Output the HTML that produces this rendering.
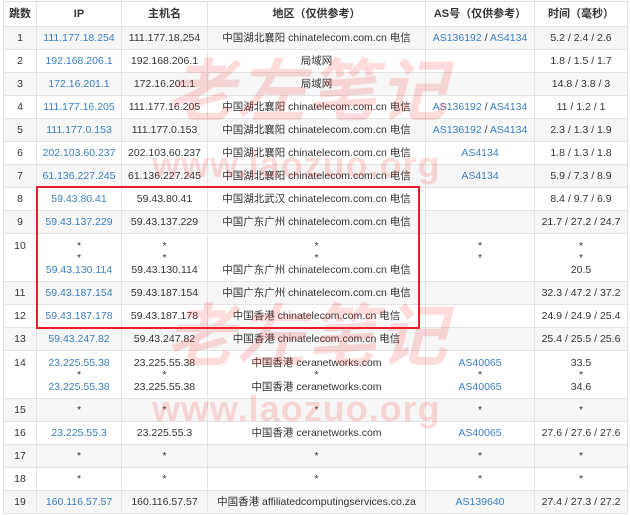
<!DOCTYPE html>
<html><head><meta charset="utf-8"><style>
body{margin:0;background:#fff;width:630px;height:515px;overflow:hidden;position:relative;font-family:"Liberation Sans","Noto Sans CJK SC",sans-serif;}
table{position:absolute;left:3px;top:1px;border-collapse:collapse;font-size:10.5px;color:#333;table-layout:fixed;}
td,th{border:1px solid #e3e3e3;text-align:center;padding:0;line-height:12px;}
th{height:24px;font-weight:bold;color:#333;font-size:11px}
td{height:22px}
tr.g td{background:#f6f6f6}
td.t{height:47px;vertical-align:middle}
td.t div{height:12px;line-height:12px;overflow:visible;white-space:nowrap}
td.v{vertical-align:top;padding-top:6px;height:41px}
a{color:#3a7fc1;text-decoration:none}
.box{position:absolute;left:36px;top:186px;width:380px;height:139px;border:2px solid #e8202a;}
.wm{position:absolute;color:rgba(255,50,50,0.17);font-weight:bold;white-space:nowrap;pointer-events:none}
.wm1{font-size:68px;line-height:80px;font-style:italic;letter-spacing:3px;font-family:"Noto Sans CJK SC",sans-serif;}
.wm2{font-size:36px;line-height:40px;letter-spacing:1px;font-family:"Liberation Sans",sans-serif}
</style></head><body>
<table>
<colgroup><col style="width:33px"><col style="width:85px"><col style="width:86px"><col style="width:218px"><col style="width:109px"><col style="width:93px"></colgroup>
<tr><th>跳数</th><th>IP</th><th>主机名</th><th>地区（仅供参考）</th><th>AS号（仅供参考）</th><th>时间（毫秒）</th></tr>
<tr class="g"><td>1</td><td><a>111.177.18.254</a></td><td>111.177.18.254</td><td>中国湖北襄阳 chinatelecom.com.cn 电信</td><td><a>AS136192</a> / <a>AS4134</a></td><td>5.2 / 2.4 / 2.6</td></tr>
<tr><td>2</td><td><a>192.168.206.1</a></td><td>192.168.206.1</td><td>局域网</td><td></td><td>1.8 / 1.5 / 1.7</td></tr>
<tr class="g"><td>3</td><td><a>172.16.201.1</a></td><td>172.16.201.1</td><td>局域网</td><td></td><td>14.8 / 3.8 / 3</td></tr>
<tr><td>4</td><td><a>111.177.16.205</a></td><td>111.177.16.205</td><td>中国湖北襄阳 chinatelecom.com.cn 电信</td><td><a>AS136192</a> / <a>AS4134</a></td><td>11 / 1.2 / 1</td></tr>
<tr class="g"><td>5</td><td><a>111.177.0.153</a></td><td>111.177.0.153</td><td>中国湖北襄阳 chinatelecom.com.cn 电信</td><td><a>AS136192</a> / <a>AS4134</a></td><td>2.3 / 1.3 / 1.9</td></tr>
<tr><td>6</td><td><a>202.103.60.237</a></td><td>202.103.60.237</td><td>中国湖北襄阳 chinatelecom.com.cn 电信</td><td><a>AS4134</a></td><td>1.8 / 1.3 / 1.8</td></tr>
<tr class="g"><td>7</td><td><a>61.136.227.245</a></td><td>61.136.227.245</td><td>中国湖北襄阳 chinatelecom.com.cn 电信</td><td><a>AS4134</a></td><td>5.9 / 7.3 / 8.9</td></tr>
<tr><td>8</td><td><a>59.43.80.41</a></td><td>59.43.80.41</td><td>中国湖北武汉 chinatelecom.com.cn 电信</td><td></td><td>8.4 / 9.7 / 6.9</td></tr>
<tr class="g"><td>9</td><td><a>59.43.137.229</a></td><td>59.43.137.229</td><td>中国广东广州 chinatelecom.com.cn 电信</td><td></td><td>21.7 / 27.2 / 24.7</td></tr>
<tr><td class="t v">10</td><td class="t"><div>*</div><div>*</div><div><a>59.43.130.114</a></div></td><td class="t"><div>*</div><div>*</div><div>59.43.130.114</div></td><td class="t"><div>*</div><div>*</div><div>中国广东广州 chinatelecom.com.cn 电信</div></td><td class="t"><div>*</div><div>*</div><div></div></td><td class="t"><div>*</div><div>*</div><div>20.5</div></td></tr>
<tr class="g"><td>11</td><td><a>59.43.187.154</a></td><td>59.43.187.154</td><td>中国广东广州 chinatelecom.com.cn 电信</td><td></td><td>32.3 / 47.2 / 37.2</td></tr>
<tr><td>12</td><td><a>59.43.187.178</a></td><td>59.43.187.178</td><td>中国香港 chinatelecom.com.cn 电信</td><td></td><td>24.9 / 24.9 / 25.4</td></tr>
<tr class="g"><td>13</td><td><a>59.43.247.82</a></td><td>59.43.247.82</td><td>中国香港 chinatelecom.com.cn 电信</td><td></td><td>25.4 / 25.5 / 25.6</td></tr>
<tr><td class="t v">14</td><td class="t"><div><a>23.225.55.38</a></div><div>*</div><div><a>23.225.55.38</a></div></td><td class="t"><div>23.225.55.38</div><div>*</div><div>23.225.55.38</div></td><td class="t"><div>中国香港 ceranetworks.com</div><div>*</div><div>中国香港 ceranetworks.com</div></td><td class="t"><div><a>AS40065</a></div><div>*</div><div><a>AS40065</a></div></td><td class="t"><div>33.5</div><div>*</div><div>34.6</div></td></tr>
<tr class="g"><td>15</td><td>*</td><td>*</td><td>*</td><td>*</td><td>*</td></tr>
<tr><td>16</td><td><a>23.225.55.3</a></td><td>23.225.55.3</td><td>中国香港 ceranetworks.com</td><td><a>AS40065</a></td><td>27.6 / 27.6 / 27.6</td></tr>
<tr class="g"><td>17</td><td>*</td><td>*</td><td>*</td><td>*</td><td>*</td></tr>
<tr><td>18</td><td>*</td><td>*</td><td>*</td><td>*</td><td>*</td></tr>
<tr class="g"><td>19</td><td><a>160.116.57.57</a></td><td>160.116.57.57</td><td>中国香港 affiliatedcomputingservices.co.za</td><td><a>AS139640</a></td><td>27.4 / 27.3 / 27.2</td></tr>
</table>
<div class="box"></div>
<div class="wm wm1" style="left:166px;top:46px">老左笔记</div>
<div class="wm wm2" style="left:152px;top:145px">www.laozuo.org</div>
<div class="wm wm1" style="left:166px;top:291px">老左笔记</div>
<div class="wm wm2" style="left:152px;top:389px">www.laozuo.org</div>
</body></html>
